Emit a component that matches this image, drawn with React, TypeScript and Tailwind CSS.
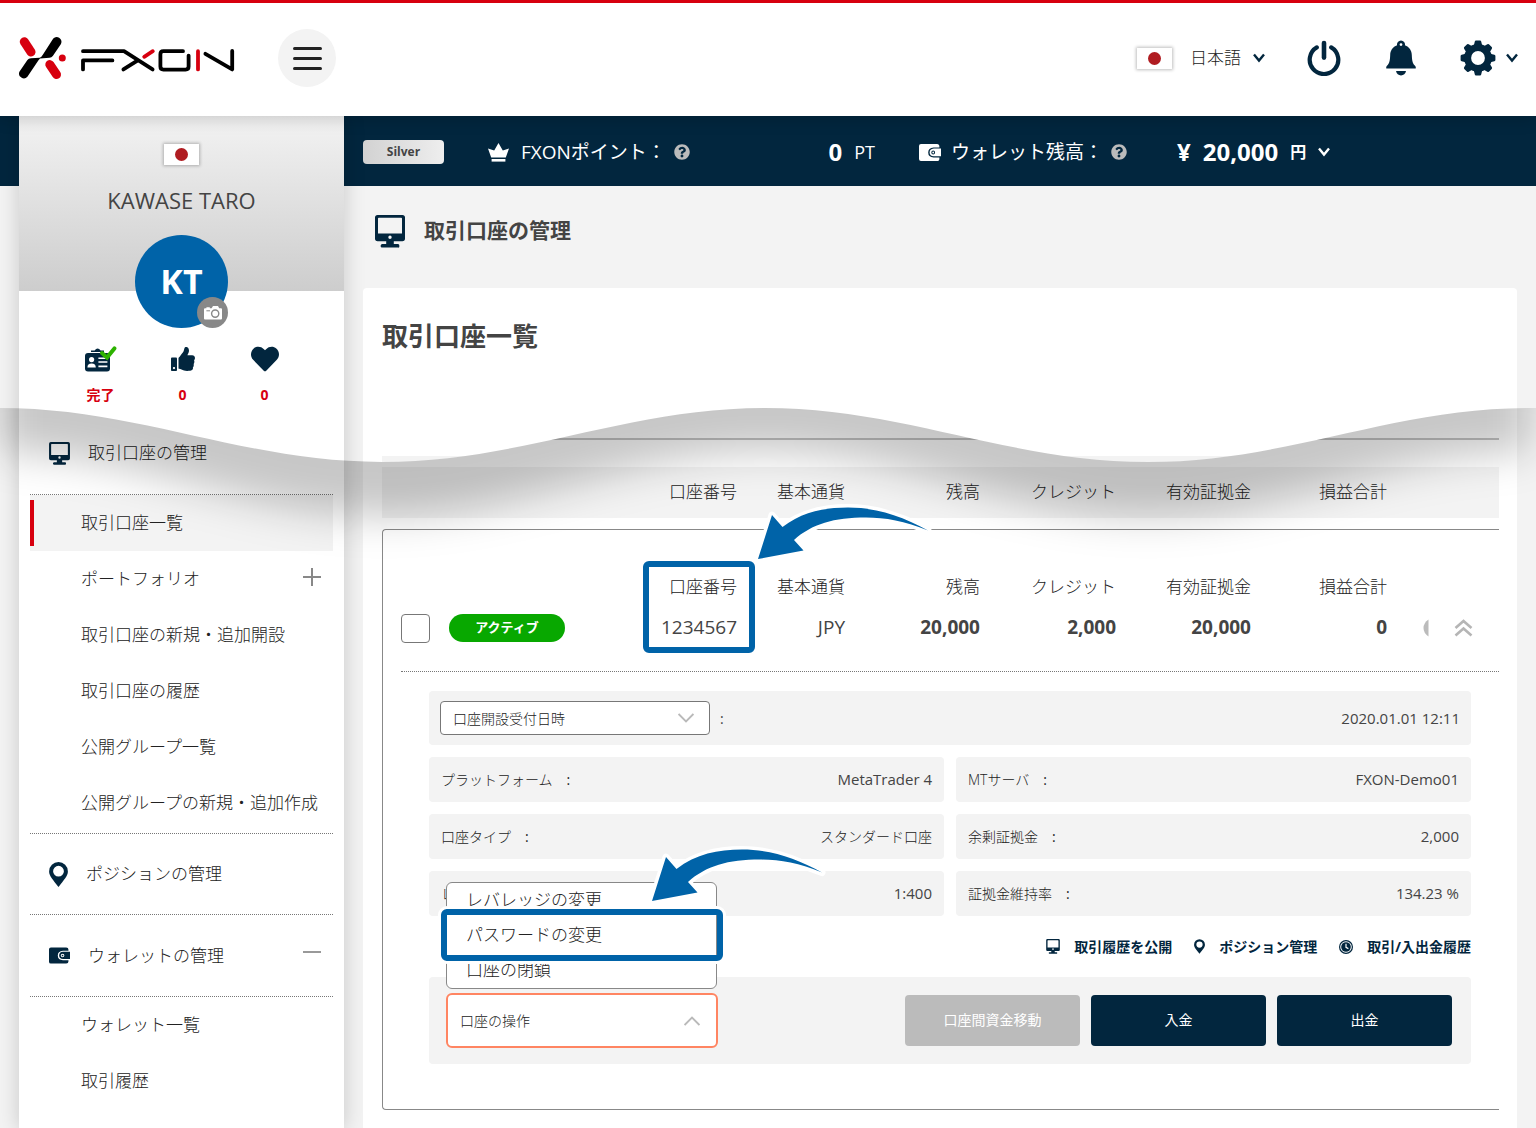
import React, { useState } from "react";
import { FaHeart, FaQuestionCircle, FaThumbsUp } from "react-icons/fa";

type IconProps = { className?: string };

function Logo() {
  return (
    <svg viewBox="18 36 220 45" className="h-[45px] w-[220px]" aria-label="FXON" role="img" fill="none" strokeLinecap="round" strokeLinejoin="round">
      <path d="M24.3 41.7L31 52" stroke="#d7000f" strokeWidth="9" />
      <path d="M49.8 64.6L56.5 74.6" stroke="#d7000f" strokeWidth="9" />
      <circle cx="62.3" cy="58" r="3.5" fill="#d7000f" />
      <path d="M52.6 39.4A4.7 4.7 0 0 1 60.8 44.2L52.8 56Q51.6 57.8 49.5 57.8L40 58.4L38.5 60.2L27.4 76.8A4.8 4.8 0 0 1 19.4 71.8L27.4 60Q28.6 58.2 31 58.2L39.6 57.8Q41.4 57.2 43 54.4Z" fill="#000" />
      <g stroke="#000" strokeWidth="3.8">
        <path d="M83 51.2H124L152.6 69.4" />
        <path d="M83 69.4V60.4H112.4" />
        <path d="M123.4 69.4L137 60.8" />
        <path d="M183 51.2H163.4Q160.4 51.2 160.4 54.2V66.6Q160.4 69.6 163.4 69.6H185.6Q188.6 69.6 188.6 66.6V55.6" />
        <path d="M205.4 53.8L232.2 69.4V51" />
      </g>
      <path d="M144.2 56.8L152.8 51.2M198 51.2V69.4" stroke="#d7000f" strokeWidth="3.8" />
    </svg>
  );
}

function Flag() {
  return (
    <span className="flex h-[21px] w-[35px] shrink-0 items-center justify-center bg-white shadow-[0_0_3px_1px_rgba(0,0,0,0.25)]">
      <span className="size-[13px] rounded-full bg-[#b01c21]" />
    </span>
  );
}

function Chevron({ className }: IconProps) {
  return (
    <svg viewBox="0 0 12 10" className={className} fill="none" stroke="currentColor" strokeWidth="2.4">
      <path d="M1 1.6L6 7.6L11 1.6" />
    </svg>
  );
}

function ThinChevron({ className }: IconProps) {
  return (
    <svg viewBox="0 0 16 10" className={className} fill="none" stroke="#b9b9b9" strokeWidth="1.8">
      <path d="M0.6 1L8 8.4L15.4 1" />
    </svg>
  );
}

function PowerIcon() {
  return (
    <svg viewBox="0 0 34 36" className="h-9 w-[34px]" fill="none" stroke="currentColor" strokeLinecap="round">
      <path d="M9.8 7.4A14.3 14.3 0 1 0 24.2 7.4" strokeWidth="4.2" />
      <path d="M17 3V17.6" strokeWidth="4.6" />
    </svg>
  );
}

function BellIcon() {
  return (
    <svg viewBox="0 0 30 36" className="h-9 w-[30px]" fill="currentColor">
      <path fillRule="evenodd" d="M15 0.4a4 4 0 0 1 3.9 4.9C23.4 7 25.600 10.600 25.800 15C26 20.400 26.600 23.600 28.800 25.400C30 26.400 30.200 28.600 29.200 28.600H0.800C-0.200 28.600 0 26.400 1.200 25.400C3.400 23.600 4 20.400 4.200 15C4.400 10.600 6.600 7 11.100 5.300A4 4 0 0 1 15 0.400ZM15 3.200a1.400 1.400 0 1 0 0 2.800a1.400 1.400 0 0 0 0-2.800Z" />
      <path d="M10 31H20Q19 35.400 15 35.400T10 31Z" />
    </svg>
  );
}

const TEETH = [0, 45, 90, 135, 180, 225, 270, 315];

function GearIcon() {
  return (
    <svg viewBox="0 0 36 36" className="size-9" fill="currentColor">
      {TEETH.map((a) => (
        <path key={a} transform={`rotate(${a} 18 18)`} d="M13 9L14.800 1.600Q15 0.600 16 0.600H20Q21 0.600 21.200 1.600L23 9Z" />
      ))}
      <circle cx="18" cy="18" r="10.4" fill="none" stroke="currentColor" strokeWidth="7" />
    </svg>
  );
}

function MonitorIcon({ className }: IconProps) {
  return (
    <svg viewBox="0 0 30 33" className={className}>
      <path fill="#02263e" fillRule="evenodd" d="M2.600 0H27.400Q30 0 30 2.600V23.600Q30 26.200 27.400 26.200H18.800V29H23Q24.400 29 24.400 31T23 32.600H7Q5.600 32.600 5.600 31T7 29H11.200V26.200H2.600Q0 26.200 0 23.600V2.600Q0 0 2.600 0ZM3.800 2.800Q3 2.800 3 3.600V18.600H27V3.600Q27 2.800 26.200 2.800ZM15 20.600a1.700 1.700 0 1 0 0 3.400a1.700 1.700 0 0 0 0-3.400Z" />
    </svg>
  );
}

function PinIcon({ className }: IconProps) {
  return (
    <svg viewBox="0 0 19 25" className={className} fill="#02263e">
      <path fillRule="evenodd" d="M9.500 0A9.400 9.400 0 0 1 18.900 9.400C18.900 14 15 17.500 9.500 25C4 17.500 0.100 14 0.100 9.400A9.400 9.400 0 0 1 9.500 0ZM9.500 3.800a5.400 5.400 0 1 0 0 10.800a5.400 5.400 0 0 0 0-10.800Z" />
    </svg>
  );
}

function WalletIcon({ className }: IconProps) {
  return (
    <svg viewBox="0 0 22 17" className={className} fill="currentColor">
      <path d="M2 0H18Q20.400 0 20.400 2.600V3.400H14.600Q9.200 3.800 9.200 8.400T14.600 13.400H20.400V14.400Q20.400 17 18 17H2Q0 17 0 15V2Q0 0 2 0Z" />
      <path fillRule="evenodd" d="M14.800 4.600H22V12.200H14.800Q10.600 11.800 10.600 8.400T14.800 4.600ZM14.200 6.600a1.900 1.900 0 1 0 0 3.800a1.900 1.900 0 0 0 0-3.800Z" />
      <circle cx="14.2" cy="8.500" r="0.9" />
    </svg>
  );
}

function CrownIcon() {
  return (
    <svg viewBox="0 0 21 19" className="h-[19px] w-[21px]" fill="#fff">
      <path d="M10.500 0L14.800 7.400L21 5.600L17.800 14.400H3.200L0 5.600L6.200 7.400Z" />
      <path d="M3.600 16H17.400V18.600H3.600Z" />
    </svg>
  );
}

function ClockIcon() {
  return (
    <svg viewBox="0 0 14 14" className="size-[14px]">
      <circle cx="7" cy="7" r="6.400" fill="none" stroke="#02263e" strokeWidth="1.200" />
      <circle cx="7" cy="7" r="4.800" fill="#02263e" />
      <path d="M7 3.800V7.400L9.400 8.600" fill="none" stroke="#fff" strokeWidth="1.200" />
    </svg>
  );
}

function IdCardIcon() {
  return (
    <svg viewBox="0 0 32 26" className="h-[26px] w-8">
      <path d="M3 7H22Q25 7 25 10V22.600Q25 25.600 22 25.600H3Q0 25.600 0 22.600V10Q0 7 3 7Z" fill="#02263e" />
      <path d="M6 4.600H9.600Q11 2.400 12.600 2.400T15.600 4.600H19V6H6Z" fill="#02263e" />
      <circle cx="6.600" cy="13.600" r="2.600" fill="#fff" />
      <path d="M2.400 21.400Q2.400 17.400 6.600 17.400T10.800 21.400Z" fill="#fff" />
      <path d="M13.400 12.200H22.400M13.400 16H22.400M13.400 20.400H22.400" stroke="#fff" strokeWidth="1.600" />
      <path d="M17 7L22 11.600L29.400 2.400" fill="none" stroke="#2db200" strokeWidth="4" strokeLinecap="round" />
    </svg>
  );
}

function CameraIcon() {
  return (
    <svg viewBox="0 0 18 14" className="h-[14px] w-[18px]">
      <path fill="#fff" d="M1 2.200H2.400V1.200H5.800V2.200H7.600L9 0H14L15.200 2.200H17Q18 2.200 18 3.200V12.600Q18 13.600 17 13.600H1Q0 13.600 0 12.600V3.200Q0 2.200 1 2.200Z" />
      <circle cx="11.200" cy="7.600" r="3.600" fill="none" stroke="#888" strokeWidth="1.400" />
      <path d="M2.400 4.800H6" stroke="#888" strokeWidth="1" />
    </svg>
  );
}

function PointerArrow({ className }: IconProps) {
  return (
    <svg viewBox="0 0 186 68" className={className} aria-hidden="true">
      <path
        d="M8 59L22 15L32.500 27C52 12 74 7.600 98 7.600C126 7.600 152 16 178 30.600C155 21 135 17.600 116 17.600C84 17.600 62 24 44 40L53.500 50.500Z"
        fill="#0063a8"
        stroke="#fff"
        strokeWidth="7"
        strokeLinejoin="round"
        paintOrder="stroke"
      />
    </svg>
  );
}

const WAVE = "C139 8 243 62 382 62S626 8 765 8S1009 62 1148 62S1391 8 1530 8L1536 8";

function TornEdge() {
  return (
    <svg viewBox="0 0 1536 200" preserveAspectRatio="none" aria-hidden="true" className="pointer-events-none absolute top-[400px] left-0 z-10 h-[200px] w-full">
      <defs>
        <clipPath id="below">
          <path d={`M0 8${WAVE}V200H0Z`} />
        </clipPath>
        <clipPath id="above">
          <path d={`M0 8${WAVE}V0H0Z`} />
        </clipPath>
        <filter id="soft" x="-10%" y="-60%" width="120%" height="260%">
          <feGaussianBlur stdDeviation="20" />
        </filter>
      </defs>
      <g clipPath="url(#above)">
        <path d="M382 56H1499V64H382Z" fill="#f3f3f3" />
      </g>
      <g clipPath="url(#below)">
        <path d="M382 39H1499" stroke="#c4c4c4" strokeWidth="2" />
        <path d="M0 52C139 52 243 116 382 116S626 52 765 52S1009 116 1148 116S1391 52 1530 52V-80H0Z" fill="#000" fillOpacity="0.22" filter="url(#soft)" />
      </g>
    </svg>
  );
}

function Header() {
  return (
    <header className="relative z-20 flex h-[116px] items-center border-t-[3px] border-[#d7000f] bg-white px-[18px] pb-[3px] shadow-[0_2px_16px_rgba(0,0,0,0.2)]">
      <a href="#home" aria-label="FXON">
        <Logo />
      </a>
      <button type="button" aria-label="メニュー" className="ml-10 flex size-[58px] flex-col items-center justify-center gap-[7px] rounded-full bg-[#f3f3f3]">
        <span className="h-[3px] w-[29px] rounded-full bg-[#222]" />
        <span className="h-[3px] w-[29px] rounded-full bg-[#222]" />
        <span className="h-[3px] w-[29px] rounded-full bg-[#222]" />
      </button>
      <div className="ml-auto flex items-center text-[#02263e]">
        <button type="button" className="flex items-center">
          <Flag />
          <span className="ml-[18px] text-[17px] font-light text-[#222]">日本語</span>
          <Chevron className="ml-3 h-[10px] w-3" />
        </button>
        <button type="button" aria-label="ログアウト" className="ml-[42px]">
          <PowerIcon />
        </button>
        <button type="button" aria-label="お知らせ" className="ml-[45px]">
          <BellIcon />
        </button>
        <button type="button" aria-label="設定" className="ml-11 flex items-center">
          <GearIcon />
          <Chevron className="ml-[10px] h-[10px] w-3" />
        </button>
      </div>
    </header>
  );
}

function StatusBar() {
  return (
    <div className="flex h-[70px] items-center pt-0.5 pl-[19px] text-white">
      <span className="flex h-6 w-[81px] items-center justify-center rounded bg-linear-to-r from-[#d2d2d2] to-[#eee] text-[12px] font-bold text-[#444]">Silver</span>
      <div className="ml-11 flex w-[387px] items-center">
        <CrownIcon />
        <span className="ml-3 text-[19px]">FXONポイント：</span>
        <FaQuestionCircle className="ml-2 size-4 text-[#bbb]" />
        <span className="ml-auto text-[24px] leading-8 font-bold">0</span>
        <span className="ml-3 text-[18px]">PT</span>
      </div>
      <div className="ml-11 flex items-center">
        <WalletIcon className="h-[17px] w-[22px]" />
        <span className="ml-[10px] text-[19px]">ウォレット残高：</span>
        <FaQuestionCircle className="ml-2 size-4 text-[#bbb]" />
        <span className="ml-[50px] text-[24px] leading-8 font-bold">¥</span>
        <span className="ml-3 text-[24px] leading-8 font-bold">20,000</span>
        <span className="ml-3 text-[16px] font-bold">円</span>
        <Chevron className="ml-3 h-[10px] w-3" />
      </div>
    </div>
  );
}

function SubItem({ label, active, expandable }: { label: string; active?: boolean; expandable?: boolean }) {
  return (
    <li className={active ? "flex h-14 items-center bg-[#f3f3f3]" : "flex h-14 items-center"}>
      <span className={active ? "h-[46px] w-1 bg-[#d7000f]" : "h-[46px] w-1"} />
      <a href="#menu" className="ml-[47px] text-[17px] font-light whitespace-nowrap text-[#222]">
        {label}
      </a>
      {expandable && (
        <svg viewBox="0 0 18 18" className="mr-3 mb-1 ml-auto size-[18px]" stroke="#888" strokeWidth="2">
          <path d="M0 9H18M9 0V18" />
        </svg>
      )}
    </li>
  );
}

const stats = [
  { icon: <IdCardIcon />, label: "完了" },
  { icon: <FaThumbsUp className="size-6 text-[#02263e]" />, label: "0" },
  { icon: <FaHeart className="size-7 text-[#02263e]" />, label: "0" },
];

function Sidebar() {
  return (
    <aside className="ml-[19px] w-[325px] shrink-0 bg-white shadow-[0_0_20px_rgba(0,0,0,0.18)]">
      <div className="flex h-[175px] flex-col items-center bg-linear-to-b from-[#f3f3f3] to-[#cdcdcd] pt-7">
        <Flag />
        <p className="mt-[19px] text-[22px] leading-8 text-[#444]">KAWASE TARO</p>
        <div className="relative mt-[19px] flex size-[93px] shrink-0 items-center justify-center rounded-full bg-[#0063a8]">
          <span className="text-[34px] font-bold text-white">KT</span>
          <button type="button" aria-label="写真を変更" className="absolute right-0 bottom-0 flex size-[31px] items-center justify-center rounded-full bg-[#888]">
            <CameraIcon />
          </button>
        </div>
      </div>
      <ul className="mx-auto grid h-[121px] w-[248px] grid-cols-3 pt-[53px] pl-0.5">
        {stats.map((s, i) => (
          <li key={i} className="flex flex-col items-center">
            <span className="flex h-[30px] items-center">{s.icon}</span>
            <span className="mt-[9px] text-[14px] leading-6 font-bold text-[#d7000f]">{s.label}</span>
          </li>
        ))}
      </ul>
      <nav className="mr-[11px] ml-[11px]">
        <a href="#accounts" className="flex h-[83px] items-center border-b border-dotted border-[#777] pl-[19px] text-[17px] font-light text-[#222]">
          <MonitorIcon className="mr-[18px] h-[23px] w-[21px]" />
          取引口座の管理
        </a>
        <ul className="border-b border-dotted border-[#777] pb-0.5">
          <SubItem label="取引口座一覧" active />
          <SubItem label="ポートフォリオ" expandable />
          <SubItem label="取引口座の新規・追加開設" />
          <SubItem label="取引口座の履歴" />
          <SubItem label="公開グループ一覧" />
          <SubItem label="公開グループの新規・追加作成" />
        </ul>
        <a href="#positions" className="flex h-[81px] items-center border-b border-dotted border-[#777] pl-[19px] text-[17px] font-light text-[#222]">
          <PinIcon className="mr-[18px] h-[25px] w-[19px]" />
          ポジションの管理
        </a>
        <a href="#wallet" className="flex h-[82px] items-center border-b border-dotted border-[#777] pl-[19px] text-[17px] font-light text-[#222]">
          <WalletIcon className="mr-[18px] h-[17px] w-[21px] text-[#02263e]" />
          ウォレットの管理
          <span className="mr-3 mb-2 ml-auto h-0.5 w-[18px] bg-[#999]" />
        </a>
        <ul>
          <SubItem label="ウォレット一覧" />
          <SubItem label="取引履歴" />
        </ul>
      </nav>
    </aside>
  );
}

const columns = ["口座番号", "基本通貨", "残高", "クレジット", "有効証拠金", "損益合計"];

function Cols() {
  return (
    <colgroup>
      <col />
      <col className="w-[109px]" />
      <col className="w-[108px]" />
      <col className="w-[135px]" />
      <col className="w-[136px]" />
      <col className="w-[135px]" />
      <col className="w-[136px]" />
      <col className="w-[112px]" />
    </colgroup>
  );
}

function AccountRow() {
  const cell = "p-0 pb-0.5 text-right text-[19px] font-bold";
  return (
    <div className="ml-[18px] h-[142px] border-b border-dotted border-[#777] pt-[38px]">
      <table className="w-full table-fixed border-collapse text-[#444]">
        <Cols />
        <thead>
          <tr className="h-10">
            <td />
            {columns.map((c, i) => (
              <th key={c} scope="col" className="relative p-0 pb-0.5 text-right text-[17px] font-light text-[#222]">
                {c}
                {i === 0 && <span className="pointer-events-none absolute -top-[7px] -right-[18px] z-20 h-[92px] w-[112px] rounded-md border-6 border-[#0063a8]" />}
              </th>
            ))}
            <td />
          </tr>
        </thead>
        <tbody>
          <tr className="h-10">
            <td className="p-0">
              <div className="flex items-center">
                <input type="checkbox" aria-label="口座 1234567 を選択" className="size-[29px] appearance-none rounded border border-[#777] bg-white" />
                <span className="ml-[19px] flex h-7 w-[116px] items-center justify-center rounded-full bg-[#08a800] text-[13px] font-bold text-white">アクティブ</span>
              </div>
            </td>
            <td className="p-0 pb-0.5 text-right text-[19px]">1234567</td>
            <td className="p-0 pb-0.5 text-right text-[19px]">JPY</td>
            <td className={cell}>20,000</td>
            <td className={cell}>2,000</td>
            <td className={cell}>20,000</td>
            <td className={cell}>0</td>
            <td className="p-0">
              <button type="button" aria-label="詳細を閉じる" className="ml-9 flex items-center">
                <svg viewBox="0 0 50 18" className="h-[18px] w-[50px]" fill="none" stroke="#b5b5b5" strokeWidth="2.600">
                  <path d="M5.500 0.500Q0.500 4 0.500 9T5.500 17.500Z" fill="#bbb" stroke="none" />
                  <path d="M32.500 9L40.500 2L48.500 9M32.500 16.500L40.500 9.500L48.500 16.500" />
                </svg>
              </button>
            </td>
          </tr>
        </tbody>
      </table>
    </div>
  );
}

function Detail({ label, value, light }: { label: string; value: string; light?: boolean }) {
  return (
    <div className="flex h-[45px] items-center justify-between rounded bg-[#f3f3f3] px-3 text-[14px] text-[#444]">
      <dt className="font-light text-[#222]">
        {label}
        <span className="ml-[14px] font-normal">:</span>
      </dt>
      <dd className={light ? "text-[14px] font-light text-[#222]" : "text-[15px]"}>{value}</dd>
    </div>
  );
}

function OperationMenu() {
  const [open, setOpen] = useState(true);
  return (
    <div className="relative w-[272px]">
      {open && (
        <ul className="absolute bottom-[59px] left-0 h-[107px] w-[271px] rounded-md border border-[#888] bg-white text-[17px] font-light text-[#222]">
          <li className="flex h-[35px] items-center pb-0.5 pl-[19px]">
            <button type="button">レバレッジの変更</button>
          </li>
          <li className="flex h-[35px] items-center pb-0.5 pl-[19px]">
            <button type="button">パスワードの変更</button>
          </li>
          <li className="flex h-[35px] items-center pb-0.5 pl-[19px]">
            <button type="button">口座の閉鎖</button>
          </li>
          <li aria-hidden="true" className="pointer-events-none absolute top-[26px] -left-[6px] h-[52px] w-[282px] rounded-md border-6 border-[#0063a8] shadow-[0_0_0_3px_#fff]" />
        </ul>
      )}
      {open && <PointerArrow className="pointer-events-none absolute -top-[151px] left-[198px] z-20 h-[68px] w-[186px]" />}
      <button
        type="button"
        aria-expanded={open}
        onClick={() => setOpen(!open)}
        className="flex h-[55px] w-full items-center justify-between rounded-md border-2 border-[#ff8562] bg-white pr-4 pl-3 text-[14px] font-light text-[#222]"
      >
        口座の操作
        <ThinChevron className="h-[10px] w-4 rotate-180" />
      </button>
    </div>
  );
}

function AccountCard() {
  return (
    <section className="relative mt-[11px] h-[581px] rounded-l border border-r-0 border-[#888] bg-white">
      <PointerArrow className="pointer-events-none absolute -top-[30px] right-[563px] z-20 h-[68px] w-[186px]" />
      <AccountRow />
      <div className="mt-[19px] mr-7 ml-[46px]">
        <div className="flex h-[54px] items-center rounded bg-[#f3f3f3] px-[11px] text-[14px] text-[#444]">
          <div className="relative flex w-[270px] items-center">
            <select aria-label="表示項目" className="h-[34px] w-full appearance-none rounded border border-[#777] bg-white pl-3 text-[14px] font-light text-[#222]">
              <option>口座開設受付日時</option>
            </select>
            <ThinChevron className="pointer-events-none absolute right-4 h-[10px] w-4" />
          </div>
          <span className="ml-[10px]">:</span>
          <span className="ml-auto text-[15px]">2020.01.01 12:11</span>
        </div>
        <dl className="mt-3 grid grid-cols-2 gap-3">
          <Detail label="プラットフォーム" value="MetaTrader 4" />
          <Detail label="MTサーバ" value="FXON-Demo01" />
          <Detail label="口座タイプ" value="スタンダード口座" light />
          <Detail label="余剰証拠金" value="2,000" />
          <Detail label="レバレッジ" value="1:400" />
          <Detail label="証拠金維持率" value="134.23 %" />
        </dl>
        <div className="flex h-[61px] items-center justify-end gap-[22px] text-[14px] font-bold text-[#02263e]">
          <a href="#publish" className="flex items-center gap-[14px]">
            <MonitorIcon className="h-[15px] w-[14px]" />
            取引履歴を公開
          </a>
          <a href="#position" className="flex items-center gap-[14px]">
            <PinIcon className="h-[15px] w-[11px]" />
            ポジション管理
          </a>
          <a href="#history" className="flex items-center gap-[14px]">
            <ClockIcon />
            取引/入出金履歴
          </a>
        </div>
        <div className="flex h-[87px] items-center rounded bg-[#f3f3f3] pr-[19px] pl-[17px] text-[14px]">
          <OperationMenu />
          <div className="ml-auto flex gap-[11px] text-white">
            <button type="button" disabled className="h-[51px] w-[175px] rounded bg-[#bbb] pb-0.5">口座間資金移動</button>
            <button type="button" className="h-[51px] w-[175px] rounded bg-[#02263e] pb-0.5">入金</button>
            <button type="button" className="h-[51px] w-[175px] rounded bg-[#02263e] pb-0.5">出金</button>
          </div>
        </div>
      </div>
    </section>
  );
}

export default function App() {
  return (
    <div lang="ja" className="relative min-h-screen overflow-hidden bg-[#f3f3f3] font-['Open_Sans','Noto_Sans_CJK_JP',sans-serif] text-[#444]">
      <Header />
      <div className="flex bg-[linear-gradient(#02263e_70px,#f3f3f3_70px)]">
        <Sidebar />
        <main className="min-w-0 flex-1">
          <StatusBar />
          <div className="flex h-[102px] items-center pb-3 pl-[31px]">
            <MonitorIcon className="h-[33px] w-[30px]" />
            <h1 className="ml-[19px] text-[21px] font-bold">取引口座の管理</h1>
          </div>
          <div className="mr-[19px] ml-[19px] rounded-t bg-white pb-5 pl-[19px]">
            <div className="mr-[18px]">
              <h2 className="h-[179px] pt-7 text-[26px] leading-10 font-bold">取引口座一覧</h2>
              <table className="h-[51px] w-full table-fixed border-collapse bg-[#f3f3f3]">
                <Cols />
                <thead>
                  <tr>
                    <td />
                    {columns.map((c) => (
                      <th key={c} scope="col" className="p-0 pb-0.5 text-right text-[17px] font-light text-[#222]">
                        {c}
                      </th>
                    ))}
                    <td />
                  </tr>
                </thead>
              </table>
              <AccountCard />
            </div>
          </div>
        </main>
      </div>
      <TornEdge />
    </div>
  );
}
